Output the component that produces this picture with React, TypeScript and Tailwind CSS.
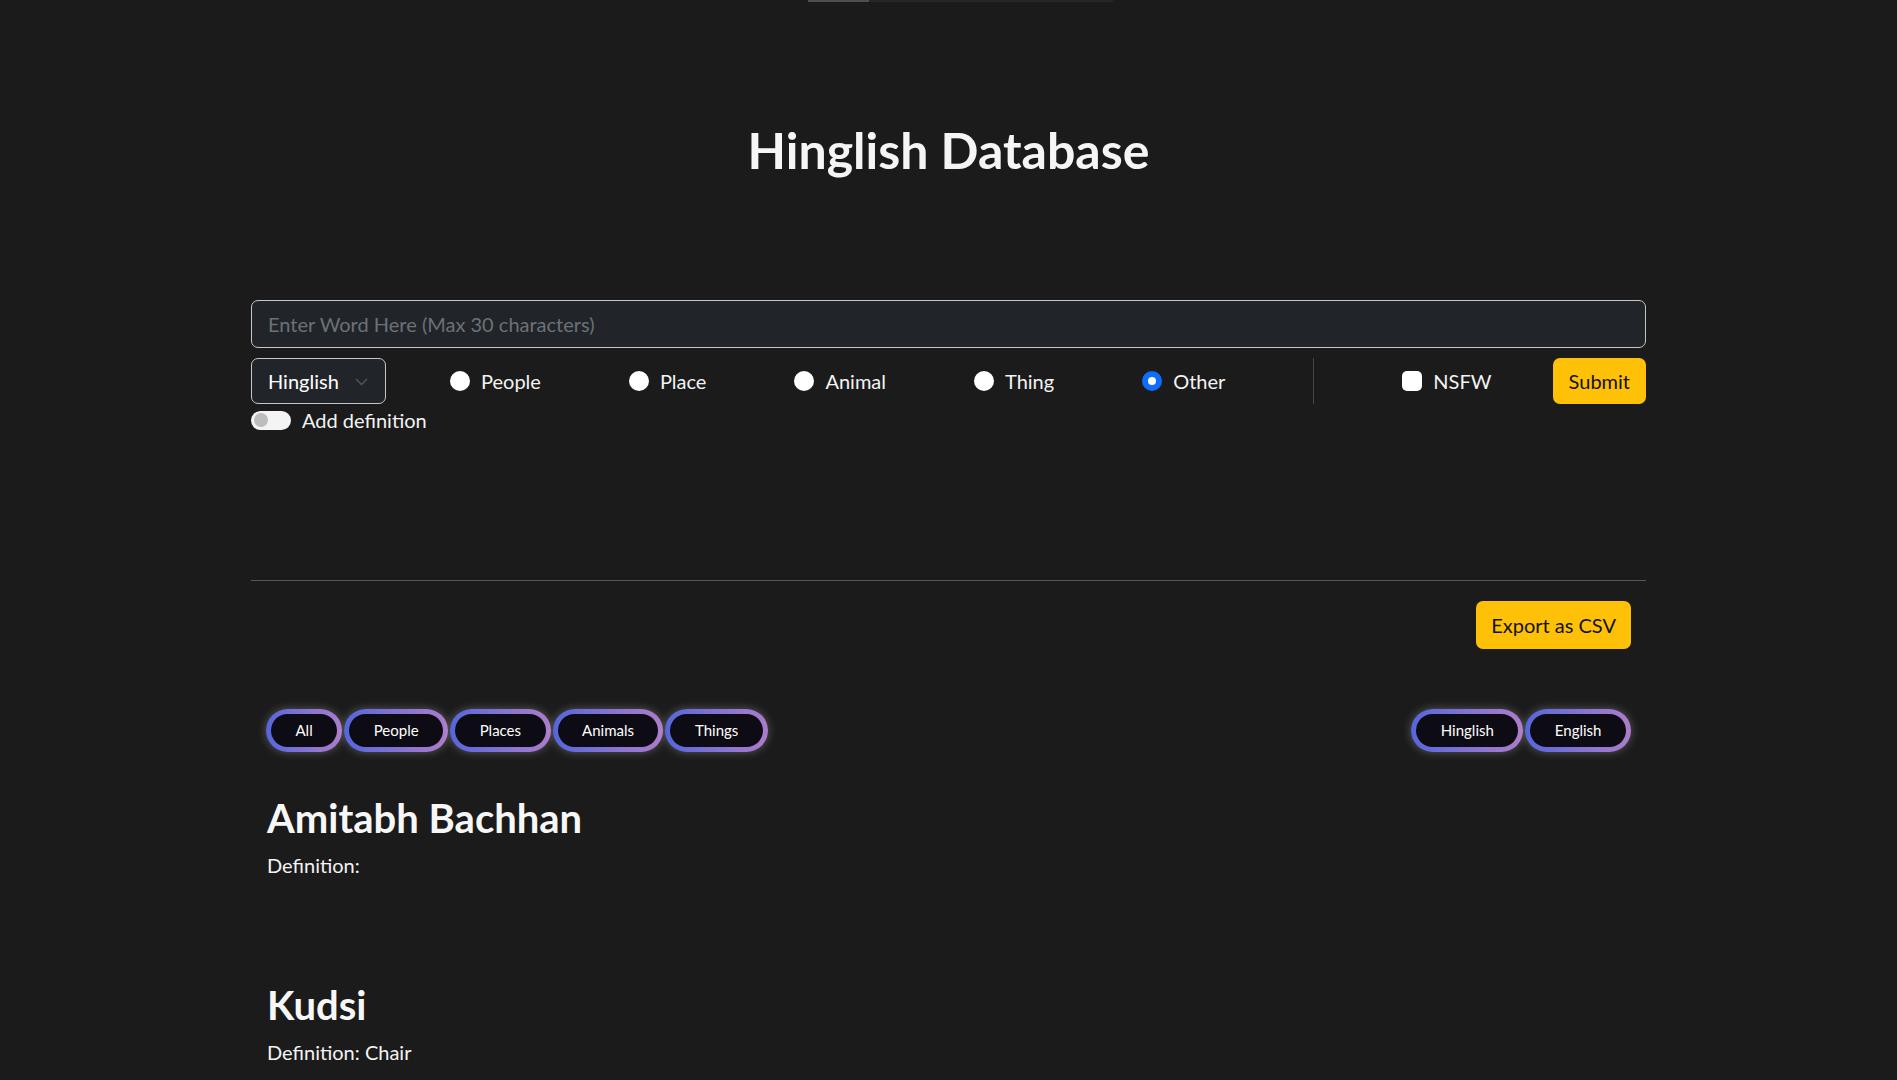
import React from "react";

const categories = ["People", "Place", "Animal", "Thing", "Other"];
const filters = ["All", "People", "Places", "Animals", "Things"];
const langs = ["Hinglish", "English"];
const words = [
  { word: "Amitabh Bachhan", definition: "" },
  { word: "Kudsi", definition: "Chair" },
];

const Radio = ({ label, checked }: { label: string; checked?: boolean }) => (
  <label className="flex items-center gap-[11px]">
    {checked ? (
      <span className="w-5 h-5 rounded-full bg-[#0d6efd] flex items-center justify-center">
        <span className="w-[8px] h-[8px] rounded-full bg-white" />
      </span>
    ) : (
      <span className="w-5 h-5 rounded-full bg-white" />
    )}
    <span className="text-[20px] leading-[30px] text-[#f3f3f3]">{label}</span>
  </label>
);

const Pill = ({ label }: { label: string }) => (
  <button className="rounded-full p-[5px] bg-linear-to-r from-[#5566db] to-[#ac7cca] shadow-[0_0_10px_rgba(255,255,255,0.28)]">
    <span className="flex h-[33px] items-center rounded-full bg-[#0d0c14] px-[24.5px] text-[15px] text-white">
      {label}
    </span>
  </button>
);

export default function App() {
  return (
    <div className="min-h-screen bg-[#1b1b1b] text-[#f5f5f5] font-['Lato',sans-serif] pb-24">
      <div className="flex h-[2px]">
        <div className="w-[808px]" />
        <div className="w-[61px] bg-[#4e4e4e]" />
        <div className="w-[244px] bg-[#262626]" />
      </div>

      <h1 className="mt-[117px] text-center text-[50px] leading-[62px] font-bold text-[#f5f5f5]">
        Hinglish Database
      </h1>

      <div className="mx-auto w-[1395px]">
        <input
          className="mt-[119px] block h-[48px] w-full rounded-[7px] border border-[#c4c6c8] bg-[#212529] px-4 text-[20px] text-white outline-none placeholder:text-[#6b7178]"
          placeholder="Enter Word Here (Max 30 characters)"
        />

        <div className="mt-[10px] flex h-[46px] items-center">
          <div className="relative h-[46px] w-[135px]">
            <select className="h-full w-full appearance-none rounded-[7px] border border-[#c4c6c8] bg-[#212529] pl-4 text-[20px] text-white outline-none">
              <option>Hinglish</option>
              <option>English</option>
            </select>
            <svg
              className="pointer-events-none absolute left-[104px] top-[20px]"
              width="13"
              height="8"
              viewBox="0 0 13 8"
              fill="none"
            >
              <path d="M1 1l5.5 5.5L12 1" stroke="#52575d" strokeWidth="1.3" />
            </svg>
          </div>

          <div className="ml-[64px] flex items-center gap-[88px]">
            {categories.map((c) => (
              <Radio key={c} label={c} checked={c === "Other"} />
            ))}
            <div className="h-[46px] w-px bg-[#464646]" />
            <label className="flex items-center gap-[11px]">
              <span className="w-5 h-5 rounded-[5px] bg-white" />
              <span className="text-[20px] leading-[30px] text-[#f3f3f3]">NSFW</span>
            </label>
          </div>

          <button className="ml-auto h-[46px] rounded-[7px] bg-[#ffc107] px-4 text-[20px] text-[#111]">
            Submit
          </button>
        </div>

        <div className="mt-[1px] flex items-center gap-[11px]">
          <span className="flex h-[19px] w-[40px] items-center rounded-full bg-[#f4f4f4] pl-[3px]">
            <span className="h-[14px] w-[14px] rounded-full bg-[#bdbdbd]" />
          </span>
          <span className="text-[20px] leading-[30px] text-[#f3f3f3]">Add definition</span>
        </div>

        <div className="mt-[145px] h-px bg-[#575757]" />

        <div className="pl-4 pr-[15px]">
          <div className="mt-[20px] flex justify-end">
            <button className="h-[48px] rounded-[7px] bg-[#ffc107] px-[15px] text-[20px] text-[#111]">
              Export as CSV
            </button>
          </div>

          <div className="mt-[60px] flex items-center justify-between">
            <div className="flex gap-[2px] -ml-[1px]">
              {filters.map((f) => (
                <Pill key={f} label={f} />
              ))}
            </div>
            <div className="flex gap-[2px]">
              {langs.map((l) => (
                <Pill key={l} label={l} />
              ))}
            </div>
          </div>

          <div className="mt-[42px] flex flex-col gap-[101px]">
            {words.map((w) => (
              <div key={w.word}>
                <h2 className="text-[40px] leading-[48px] font-bold text-[#f7f7f7]">
                  {w.word}
                </h2>
                <p className="mt-[8px] text-[20px] leading-[30px] text-[#f3f3f3]">
                  Definition: {w.definition}
                </p>
              </div>
            ))}
          </div>
        </div>
      </div>
    </div>
  );
}
